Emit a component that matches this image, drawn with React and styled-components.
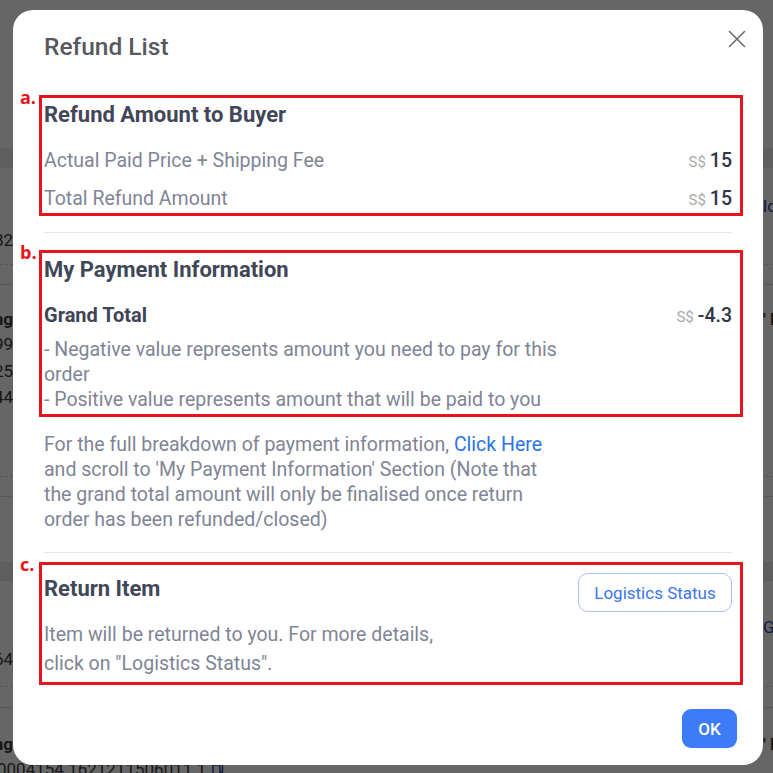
import React from "react";
import styled, { createGlobalStyle } from "styled-components";

const Global = createGlobalStyle`
  *, *::before, *::after { box-sizing: border-box; }
  html, body { margin: 0; padding: 0; }
  body { font-family: Roboto, "Liberation Sans", Arial, sans-serif; }
`;

const Screen = styled.div`
  position: relative;
  width: 773px;
  height: 773px;
  overflow: hidden;
  background: #ffffff;
`;

/* ---------- page behind the modal ---------- */
const BgPage = styled.div`
  display: flex;
  flex-direction: column;
  width: 773px;
`;

const BgRow = styled.div`
  height: ${(p) => p.$h}px;
  flex: none;
  display: flex;
  justify-content: space-between;
  align-items: center;
  background: ${(p) => (p.$band ? "#ececec" : "transparent")};
  border-bottom: ${(p) => (p.$line ? `1px ${p.$line} #dcdcdc` : "none")};
  font-size: 17px;
  color: #3a3a3a;
  font-weight: ${(p) => (p.$bold ? 700 : 400)};
`;

const LeftFrag = styled.div`
  width: 13px;
  overflow: hidden;
  display: flex;
  justify-content: flex-end;
  white-space: nowrap;
`;

const RightFrag = styled.div`
  width: 10px;
  overflow: hidden;
  white-space: nowrap;
  color: ${(p) => (p.$link ? "#2a3f9c" : "inherit")};
`;

const BottomText = styled.div`
  margin-left: -3px;
  white-space: nowrap;
  color: #3a3a3a;
  display: flex;
  align-items: center;
  gap: 6px;
`;

/* ---------- overlay and modal ---------- */
const Overlay = styled.div`
  position: absolute;
  inset: 0;
  background: rgba(0, 0, 0, 0.6);
  display: flex;
  align-items: flex-start;
  padding: 10px 10px 8px 13px;
`;

const Modal = styled.div`
  width: 750px;
  height: 755px;
  background: #ffffff;
  border-radius: 20px;
  padding: 22px 31px 17px 31px;
  display: flex;
  flex-direction: column;
`;

const Header = styled.div`
  height: 30px;
  display: flex;
  justify-content: space-between;
  align-items: center;
`;

const Title = styled.h1`
  margin: 0;
  font-size: 24.5px;
  line-height: 30px;
  font-weight: 500;
  color: #57595f;
`;

const CloseButton = styled.button`
  margin-right: -14px;
  margin-top: -16px;
  width: 18px;
  height: 18px;
  padding: 0;
  border: none;
  background: none;
  display: flex;
  align-items: center;
  justify-content: center;
  cursor: pointer;
`;

const Box = styled.section`
  position: relative;
  margin: ${(p) => p.$mt}px -11px 0 -5px;
  border: 3px solid #e8131b;
  padding: ${(p) => p.$pad};
`;

const Mark = styled.span`
  position: absolute;
  left: -22px;
  top: -12px;
  font-family: "Open Sans", "Liberation Sans", sans-serif;
  font-weight: 700;
  font-size: 18px;
  line-height: 22px;
  color: #e8131b;
`;

const Heading = styled.h2`
  margin: ${(p) => p.$mt || 0}px 0 0 0;
  font-size: 22px;
  line-height: 28px;
  font-weight: 700;
  color: #414758;
`;

const Row = styled.div`
  margin-top: ${(p) => p.$mt}px;
  height: 28px;
  display: flex;
  justify-content: space-between;
  align-items: center;
`;

const RowLabel = styled.span`
  font-size: ${(p) => (p.$strong ? 20 : 19.5)}px;
  color: ${(p) => (p.$strong ? "#3f4457" : "#7f8496")};
  font-weight: ${(p) => (p.$strong ? 700 : 400)};
`;

const Amount = styled.span`
  display: flex;
  align-items: baseline;
  gap: 4px;
`;

const Currency = styled.span`
  font-size: 15px;
  color: #a8a8a8;
`;

const Value = styled.span`
  font-size: 19.5px;
  font-weight: 500;
  color: #30354a;
`;

const Text = styled.p`
  margin: ${(p) => p.$mt}px 0 0 0;
  max-width: 520px;
  font-size: 19.5px;
  line-height: ${(p) => p.$lh}px;
  color: #7f8496;
`;

const Link = styled.a`
  color: #2b72ee;
  text-decoration: none;
  cursor: pointer;
`;

const Divider = styled.hr`
  margin: ${(p) => p.$mt}px 0 0 0;
  border: none;
  height: 1px;
  background: #e7e7e9;
  flex: none;
`;

const HeadRow = styled.div`
  display: flex;
  justify-content: space-between;
  align-items: flex-start;
`;

const OutlineButton = styled.button`
  height: 39px;
  width: 154px;
  border: 1px solid #a8c0f4;
  border-radius: 10px;
  background: #ffffff;
  color: #3a75ef;
  font-family: inherit;
  font-size: 17px;
  cursor: pointer;
`;

const Footer = styled.div`
  margin-top: auto;
  margin-right: -5px;
  display: flex;
  justify-content: flex-end;
`;

const PrimaryButton = styled.button`
  width: 55px;
  height: 39px;
  border: none;
  border-radius: 9px;
  background: #3d7cf9;
  color: #ffffff;
  font-family: inherit;
  font-size: 17px;
  font-weight: 500;
  cursor: pointer;
`;

const bgRows = [
  { h: 148 },
  { h: 20, band: true },
  { h: 25 },
  { h: 25, right: "lo", link: true },
  { h: 10 },
  { h: 24, left: "82" },
  { h: 13, line: "dashed" },
  { h: 20, line: "solid" },
  { h: 22 },
  { h: 24, left: "ng", right: "' K", bold: true },
  { h: 26, left: "99" },
  { h: 27, left: "25" },
  { h: 26, left: "44" },
  { h: 67, line: "dashed" },
  { h: 20, line: "solid" },
  { h: 65 },
  { h: 19, band: true },
  { h: 34 },
  { h: 24, right: "Ga", link: true },
  { h: 8 },
  { h: 24, left: "64" },
  { h: 16, line: "dashed" },
  { h: 21, line: "solid" },
  { h: 24 },
  { h: 24, left: "ng", right: "' K", bold: true },
];

export default function App() {
  return (
    <>
      <Global />
      <Screen>
        <BgPage>
          {bgRows.map((r, i) => (
            <BgRow key={i} $h={r.h} $band={r.band} $line={r.line} $bold={r.bold}>
              <LeftFrag>{r.left || ""}</LeftFrag>
              <RightFrag $link={r.link}>{r.right || ""}</RightFrag>
            </BgRow>
          ))}
          <BgRow $h={26}>
            <BottomText>
              0004154 1621211506011 1
              <svg width="12" height="14" viewBox="0 0 12 14" fill="none" stroke="#2a3f9c" strokeWidth="1.4">
                <rect x="1" y="3" width="7" height="9" rx="1" />
                <path d="M4 3V1.5h6.5V10H8" />
              </svg>
            </BottomText>
            <span />
          </BgRow>
        </BgPage>

        <Overlay>
          <Modal>
            <Header>
              <Title>Refund List</Title>
              <CloseButton aria-label="Close">
                <svg width="18" height="18" viewBox="0 0 18 18" fill="none" stroke="#66686d" strokeWidth="1.5" strokeLinecap="round">
                  <path d="M1.5 1.5L16.5 16.5M16.5 1.5L1.5 16.5" />
                </svg>
              </CloseButton>
            </Header>

            <Box $mt={33} $pad="3px 8px 1px 2px">
              <Mark>a.</Mark>
              <Heading>Refund Amount to Buyer</Heading>
              <Row $mt={17}>
                <RowLabel>Actual Paid Price + Shipping Fee</RowLabel>
                <Amount>
                  <Currency>S$</Currency>
                  <Value>15</Value>
                </Amount>
              </Row>
              <Row $mt={10}>
                <RowLabel>Total Refund Amount</RowLabel>
                <Amount>
                  <Currency>S$</Currency>
                  <Value>15</Value>
                </Amount>
              </Row>
            </Box>

            <Divider $mt={16} />

            <Box $mt={17} $pad="3px 8px 2px 2px">
              <Mark>b.</Mark>
              <Heading>My Payment Information</Heading>
              <Row $mt={17}>
                <RowLabel $strong>Grand Total</RowLabel>
                <Amount>
                  <Currency>S$</Currency>
                  <Value>-4.3</Value>
                </Amount>
              </Row>
              <Text $mt={8} $lh={25}>
                - Negative value represents amount you need to pay for this order
                <br />- Positive value represents amount that will be paid to you
              </Text>
            </Box>

            <Text $mt={15} $lh={25}>
              For the full breakdown of payment information, <Link>Click Here</Link> and
              scroll to 'My Payment Information' Section (Note that the grand total amount
              will only be finalised once return order has been refunded/closed)
            </Text>

            <Divider $mt={20} />

            <Box $mt={9} $pad="8px 8px 4px 2px">
              <Mark>c.</Mark>
              <HeadRow>
                <Heading $mt={2}>Return Item</Heading>
                <OutlineButton>Logistics Status</OutlineButton>
              </HeadRow>
              <Text $mt={8} $lh={29}>
                Item will be returned to you. For more details,
                <br />
                click on "Logistics Status".
              </Text>
            </Box>

            <Footer>
              <PrimaryButton>OK</PrimaryButton>
            </Footer>
          </Modal>
        </Overlay>
      </Screen>
    </>
  );
}
